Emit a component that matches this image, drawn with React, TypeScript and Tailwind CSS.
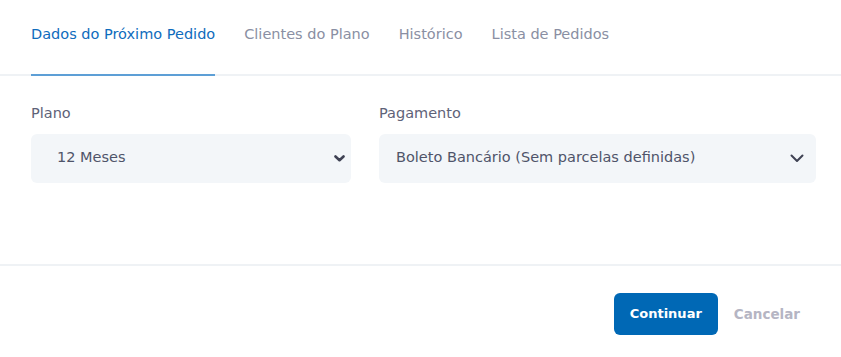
import React from 'react';

const tabs = ['Dados do Próximo Pedido', 'Clientes do Plano', 'Histórico', 'Lista de Pedidos'];

const Chevron: React.FC<{ thin?: boolean }> = ({ thin }) =>
  thin ? (
    <svg width="14" height="9" viewBox="0 0 14 9" fill="none">
      <path d="M1.5 1.5 L7 7 L12.5 1.5" stroke="#3f4254" strokeWidth="2" strokeLinecap="round" strokeLinejoin="round" />
    </svg>
  ) : (
    <svg width="11" height="7" viewBox="0 0 11 7" fill="none">
      <path d="M1.5 1.5 L5.5 5.2 L9.5 1.5" stroke="#3f4254" strokeWidth="2.6" strokeLinecap="round" strokeLinejoin="round" />
    </svg>
  );

export default function App() {
  return (
    <div className="w-[841px] h-[357px] bg-white flex flex-col" style={{ fontFamily: '"DejaVu Sans", sans-serif' }}>
      {/* Tabs */}
      <div className="flex gap-[29px] px-[31px] border-b-2 border-[#eff2f5] h-[76px]">
        {tabs.map((t, i) => (
          <div
            key={t}
            className={
              'flex flex-col justify-start pt-[24px] text-[14.5px] font-medium -mb-[2px] ' +
              (i === 0 ? 'text-[#0f6cbd] border-b-2 border-[#5d9fd6]' : 'text-[#8a8fa3]')
            }
          >
            {t}
          </div>
        ))}
      </div>

      {/* Form */}
      <div className="flex gap-[28px] pl-[31px] pr-[25px] pt-[27px] h-[188px]">
        <div className="w-[320px] shrink-0 flex flex-col">
          <label className="text-[14.5px] text-[#5e6278] mb-[9px]">Plano</label>
          <div className="h-[49px] rounded-md bg-[#f3f6f9] flex items-center justify-between pl-[26px] pr-[6px]">
            <span className="text-[14.5px] text-[#4f5469]">12 Meses</span>
            <Chevron />
          </div>
        </div>
        <div className="w-[437px] shrink-0 flex flex-col">
          <label className="text-[14.5px] text-[#5e6278] mb-[9px]">Pagamento</label>
          <div className="h-[49px] rounded-md bg-[#f3f6f9] flex items-center justify-between pl-[17px] pr-[12px]">
            <span className="text-[14.5px] text-[#4f5469]">Boleto Bancário (Sem parcelas definidas)</span>
            <Chevron thin />
          </div>
        </div>
      </div>

      {/* Footer */}
      <div className="border-t-2 border-[#eff2f5] flex justify-end items-start gap-[16px] pt-[27px] pr-[41px]">
        <button className="h-[42px] px-[16px] rounded-md bg-[#0068b5] text-white text-[13px] font-bold">Continuar</button>
        <button className="h-[42px] text-[13.5px] font-semibold text-[#b5b5c3]">Cancelar</button>
      </div>
    </div>
  );
}
